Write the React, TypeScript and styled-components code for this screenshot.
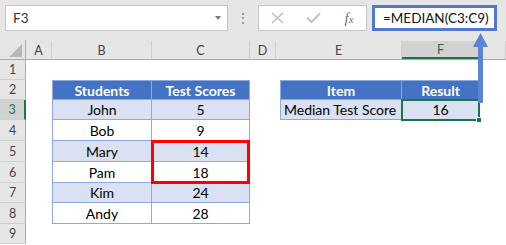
import React from "react";
import styled, { createGlobalStyle } from "styled-components";

const GlobalStyle = createGlobalStyle`
  html, body { margin: 0; padding: 0; background: #ffffff; }
  body { font-family: Lato, "Liberation Sans", sans-serif; }
  * { box-sizing: border-box; }
`;

const COLS = "26px 26px 100px 98px 26px 126px 78px 1fr";

const Page = styled.div`
  position: relative;
  width: 506px;
  height: 245px;
  overflow: hidden;
  background: #ffffff;
`;

const Toolbar = styled.div`
  height: 40px;
  background: #e6e6e6;
  display: flex;
  align-items: flex-start;
  padding: 5px 0 0 5px;
`;

const NameBox = styled.div`
  width: 223px;
  height: 26px;
  background: #ffffff;
  border: 1px solid #c6c6c6;
  display: flex;
  align-items: center;
  justify-content: space-between;
  padding: 0 6px 0 7px;
  font-size: 13.5px;
  color: #333333;
`;

const DropTri = styled.span`
  width: 0;
  height: 0;
  border-left: 3.5px solid transparent;
  border-right: 3.5px solid transparent;
  border-top: 4px solid #7a7a7a;
`;

const Dots = styled.div`
  width: 30px;
  height: 26px;
  display: flex;
  flex-direction: column;
  align-items: center;
  justify-content: center;
  gap: 2.5px;
  & > span {
    width: 2px;
    height: 2px;
    background: #9a9a9a;
  }
`;

const Tools = styled.div`
  width: 109px;
  height: 26px;
  background: #ffffff;
  border: 1px solid #c6c6c6;
  display: grid;
  grid-template-columns: repeat(3, 36px);
  align-items: center;
  justify-items: center;
`;

const Fx = styled.span`
  font-family: "Liberation Serif", serif;
  font-style: italic;
  font-size: 15px;
  color: #6e6e6e;
  line-height: 1;
  & > span {
    font-size: 11px;
  }
`;

const FormulaInput = styled.div`
  margin-left: 5px;
  width: 125px;
  height: 26px;
  background: #ffffff;
  border: 3px solid #4e7bd0;
  display: flex;
  align-items: center;
  padding-left: 8px;
  font-size: 13.5px;
  color: #111111;
  white-space: nowrap;
`;

const HeaderRow = styled.div`
  display: grid;
  grid-template-columns: ${COLS};
  height: 20px;
  background: #e6e6e6;
  border-bottom: 1px solid #ababab;
`;

const Corner = styled.div`
  position: relative;
  border-right: 1px solid #ababab;
`;

const CornerTri = styled.span`
  position: absolute;
  right: 3px;
  bottom: 2px;
  width: 0;
  height: 0;
  border-left: 13px solid transparent;
  border-bottom: 13px solid #b8b8b8;
`;

const ColHead = styled.div<{ $sel?: boolean }>`
  display: flex;
  align-items: center;
  justify-content: center;
  font-size: 12.5px;
  color: ${(p) => (p.$sel ? "#217346" : "#444444")};
  background: ${(p) => (p.$sel ? "#d2d2d2" : "transparent")};
  border-right: 1px solid #cfcfcf;
  border-bottom: ${(p) => (p.$sel ? "2px solid #217346" : "none")};
  margin-top: 1px;
`;

const Row = styled.div<{ $h: number }>`
  display: grid;
  grid-template-columns: ${COLS};
  height: ${(p) => p.$h}px;
`;

const RowHead = styled.div<{ $sel?: boolean }>`
  display: flex;
  align-items: center;
  justify-content: center;
  font-size: 12.5px;
  color: ${(p) => (p.$sel ? "#217346" : "#444444")};
  background: ${(p) => (p.$sel ? "#d2d2d2" : "#e6e6e6")};
  border-right: ${(p) => (p.$sel ? "2px solid #217346" : "1px solid #ababab")};
  border-bottom: 1px solid #cfcfcf;
`;

type Kind = "empty" | "head" | "band" | "plain";

const Cell = styled.div<{
  $kind: Kind;
  $top?: boolean;
  $left?: boolean;
  $alignLeft?: boolean;
  $inset?: number;
}>`
  position: relative;
  display: flex;
  align-items: center;
  justify-content: ${(p) => (p.$alignLeft ? "flex-start" : "center")};
  padding-left: ${(p) => (p.$alignLeft ? "3px" : "0")};
  margin-left: ${(p) => p.$inset ?? 0}px;
  font-size: 14px;
  white-space: nowrap;
  color: ${(p) => (p.$kind === "head" ? "#ffffff" : "#000000")};
  font-weight: ${(p) => (p.$kind === "head" ? 700 : 400)};
  background: ${(p) =>
    p.$kind === "head" ? "#4472c4" : p.$kind === "band" ? "#d9e1f2" : "#ffffff"};
  border-right: ${(p) => (p.$kind === "empty" ? "none" : "1px solid #8ea9db")};
  border-bottom: ${(p) => (p.$kind === "empty" ? "none" : "1px solid #8ea9db")};
  border-top: ${(p) => (p.$top ? "1px solid #8ea9db" : "none")};
  border-left: ${(p) => (p.$left ? "1px solid #8ea9db" : "none")};
`;

const RedBox = styled.span`
  position: absolute;
  left: -1px;
  right: -1px;
  top: -1px;
  height: 44px;
  border: 3px solid #ff0000;
  pointer-events: none;
  z-index: 2;
`;

const Selection = styled.span`
  position: absolute;
  left: -1px;
  right: -1px;
  top: -1px;
  bottom: -2px;
  border: 2px solid #217346;
  z-index: 2;
`;

const Handle = styled.span`
  position: absolute;
  right: -4px;
  bottom: -4px;
  width: 6px;
  height: 6px;
  background: #217346;
  border: 1px solid #ffffff;
`;

const Arrow = styled.svg`
  position: absolute;
  left: 472px;
  top: 32px;
  z-index: 5;
`;

type CellDef = {
  kind: Kind;
  text?: string;
  top?: boolean;
  left?: boolean;
  alignLeft?: boolean;
  inset?: number;
  red?: boolean;
  sel?: boolean;
};

type RowDef = { n: number; h: number; cells: Record<string, CellDef> };

const band = (i: number): Kind => (i % 2 === 0 ? "band" : "plain");

const students: [string, string][] = [
  ["John", "5"],
  ["Bob", "9"],
  ["Mary", "14"],
  ["Pam", "18"],
  ["Kim", "24"],
  ["Andy", "28"],
];

const heights = [20, 20, 20, 21, 21, 21, 20, 21, 20];

const rows: RowDef[] = heights.map((h, i) => {
  const n = i + 1;
  const cells: Record<string, CellDef> = {};
  if (n === 2) {
    cells.B = { kind: "head", text: "Students", top: true, left: true };
    cells.C = { kind: "head", text: "Test Scores", top: true };
    cells.E = { kind: "head", text: "Item", top: true, left: true, inset: 4 };
    cells.F = { kind: "head", text: "Result", top: true };
  } else if (n >= 3 && n <= 8) {
    const k = band(n - 3);
    const [name, score] = students[n - 3];
    cells.B = { kind: k, text: name, left: true };
    cells.C = { kind: k, text: score, red: n === 5 };
    if (n === 3) {
      cells.E = { kind: "band", text: "Median Test Score", left: true, alignLeft: true, inset: 4 };
      cells.F = { kind: "band", text: "16", sel: true };
    }
  }
  return { n, h, cells };
});

const letters = ["A", "B", "C", "D", "E", "F", "G"];

export default function App() {
  return (
    <Page>
      <GlobalStyle />
      <Toolbar>
        <NameBox>
          <span>F3</span>
          <DropTri />
        </NameBox>
        <Dots>
          <span />
          <span />
          <span />
        </Dots>
        <Tools>
          <svg width="13" height="12" viewBox="0 0 13 12">
            <path d="M1 1 L12 11 M12 1 L1 11" stroke="#bdbdbd" strokeWidth="1.5" fill="none" />
          </svg>
          <svg width="15" height="12" viewBox="0 0 15 12">
            <path d="M1 5.5 L5.5 10 L14 1.5" stroke="#c2c2c2" strokeWidth="2" fill="none" />
          </svg>
          <Fx>
            f<span>x</span>
          </Fx>
        </Tools>
        <FormulaInput>=MEDIAN(C3:C9)</FormulaInput>
      </Toolbar>

      <HeaderRow>
        <Corner>
          <CornerTri />
        </Corner>
        {letters.map((l) => (
          <ColHead key={l} $sel={l === "F"}>
            {l === "G" ? "" : l}
          </ColHead>
        ))}
      </HeaderRow>

      {rows.map((r) => (
        <Row key={r.n} $h={r.h}>
          <RowHead $sel={r.n === 3}>{r.n}</RowHead>
          {letters.map((l) => {
            const c = r.cells[l];
            if (!c) return <Cell key={l} $kind="empty" />;
            return (
              <Cell
                key={l}
                $kind={c.kind}
                $top={c.top}
                $left={c.left}
                $alignLeft={c.alignLeft}
                $inset={c.inset}
              >
                {c.text}
                {c.red && <RedBox />}
                {c.sel && (
                  <Selection>
                    <Handle />
                  </Selection>
                )}
              </Cell>
            );
          })}
        </Row>
      ))}

      <Arrow width="17" height="72" viewBox="0 0 17 72">
        <polygon points="8.5,1 1,15 16,15" fill="#5b84d4" />
        <rect x="6" y="14" width="5" height="57" fill="#5b84d4" />
      </Arrow>
    </Page>
  );
}
